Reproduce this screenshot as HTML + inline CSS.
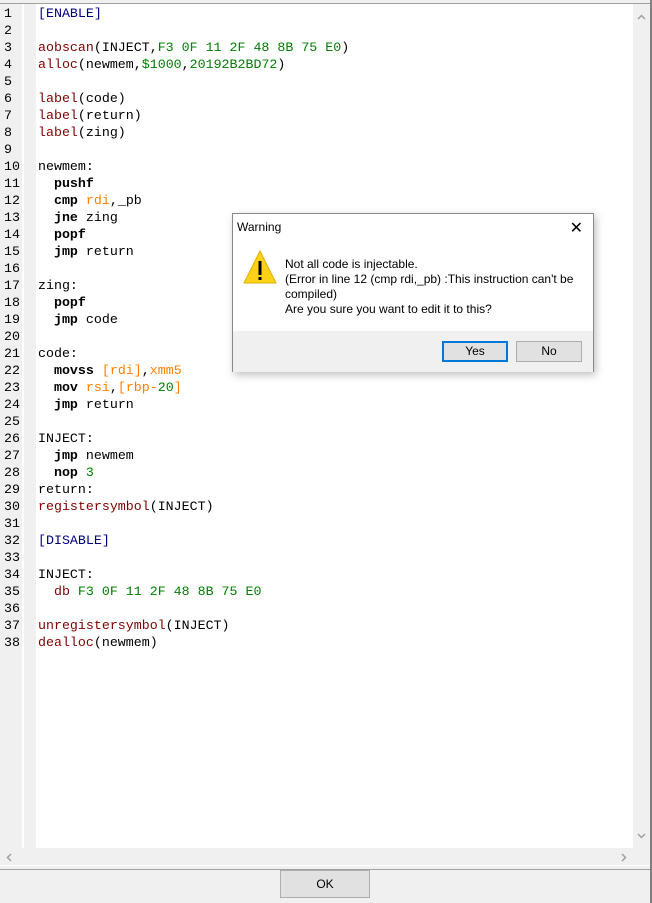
<!DOCTYPE html>
<html><head><meta charset="utf-8"><style>
*{margin:0;padding:0;box-sizing:border-box}
body{width:652px;height:903px;background:#f0f0f0;position:relative;overflow:hidden;font-family:"Liberation Sans",sans-serif}
.topline{position:absolute;left:0;top:3px;width:652px;height:1px;background:#a0a0a0}
.rightb{position:absolute;right:0;top:0;width:2px;height:903px;background:#808080}
.ed{position:absolute;left:0;top:4px;width:650px;height:862px;background:#fff}
.g1{position:absolute;left:0;top:0;width:22px;height:844px;background:#f0f0f0}
.g2{position:absolute;left:24px;top:0;width:12px;height:844px;background:#f0f0f0}
.vs{position:absolute;left:633px;top:0;width:17px;height:844px;background:#f0f0f0}
.hs{position:absolute;left:0;top:844px;width:650px;height:17px;background:#f0f0f0}
.sep{position:absolute;left:0;top:865px;width:650px;height:1px;background:#a0a0a0}
pre{position:absolute;top:5px;font-family:"Liberation Mono",monospace;font-size:13.3px;line-height:17px;color:#000}
.nums{left:4px}
.code{left:38px}
.k{color:#800000}.b{color:#000080}.n{color:#008000}.o{color:#ff8000}.i{font-weight:bold}
svg.a{position:absolute}
.ok{position:absolute;left:280px;top:870px;width:90px;height:28px;background:#e1e1e1;border:1px solid #adadad;font-size:12px;text-align:center;line-height:26px}
.dlg{position:absolute;left:232px;top:213px;width:362px;height:159px;background:#fff;border:1px solid #888;box-shadow:2px 3px 8px rgba(0,0,0,.25)}
.title{position:absolute;left:4px;top:6px;font-size:12px}
.x{position:absolute;right:10px;top:4px;font-size:16px;color:#000}
.msg{position:absolute;left:52px;top:43px;font-size:12px;line-height:15px}
.foot{position:absolute;left:0;top:117px;width:360px;height:41px;background:#f0f0f0}
.btn{position:absolute;top:10px;width:66px;height:21px;background:#e1e1e1;border:1px solid #adadad;font-size:12px;text-align:center;line-height:19px}
</style></head><body>
<div class="ed">
<div class="g1"></div><div class="g2"></div><div class="vs"></div><div class="hs"></div><div class="sep"></div>
<svg class="a" style="left:637px;top:10px" width="9" height="6"><path d="M1 5 L4.5 1.5 L8 5" fill="none" stroke="#a0a0a0" stroke-width="1.5"/></svg>
<svg class="a" style="left:637px;top:829px" width="9" height="6"><path d="M1 1 L4.5 4.5 L8 1" fill="none" stroke="#a0a0a0" stroke-width="1.5"/></svg>
<svg class="a" style="left:6px;top:849px" width="6" height="9"><path d="M5 1 L1.5 4.5 L5 8" fill="none" stroke="#a0a0a0" stroke-width="1.5"/></svg>
<svg class="a" style="left:621px;top:849px" width="6" height="9"><path d="M1 1 L4.5 4.5 L1 8" fill="none" stroke="#a0a0a0" stroke-width="1.5"/></svg>
</div>
<div class="topline"></div>
<pre class="nums">1
2
3
4
5
6
7
8
9
10
11
12
13
14
15
16
17
18
19
20
21
22
23
24
25
26
27
28
29
30
31
32
33
34
35
36
37
38</pre>
<pre class="code"><span class="b">[ENABLE]</span>

<span class="k">aobscan</span>(INJECT,<span class="n">F3 0F 11 2F 48 8B 75 E0</span>)
<span class="k">alloc</span>(newmem,<span class="n">$1000</span>,<span class="n">20192B2BD72</span>)

<span class="k">label</span>(code)
<span class="k">label</span>(return)
<span class="k">label</span>(zing)

newmem:
  <span class="i">pushf</span>
  <span class="i">cmp</span> <span class="o">rdi</span>,_pb
  <span class="i">jne</span> zing
  <span class="i">popf</span>
  <span class="i">jmp</span> return

zing:
  <span class="i">popf</span>
  <span class="i">jmp</span> code

code:
  <span class="i">movss</span> <span class="o">[rdi]</span>,<span class="o">xmm5</span>
  <span class="i">mov</span> <span class="o">rsi</span>,<span class="o">[rbp-</span><span class="n">20</span><span class="o">]</span>
  <span class="i">jmp</span> return

INJECT:
  <span class="i">jmp</span> newmem
  <span class="i">nop</span> <span class="n">3</span>
return:
<span class="k">registersymbol</span>(INJECT)

<span class="b">[DISABLE]</span>

INJECT:
  <span class="k">db</span> <span class="n">F3 0F 11 2F 48 8B 75 E0</span>

<span class="k">unregistersymbol</span>(INJECT)
<span class="k">dealloc</span>(newmem)</pre>
<div class="rightb"></div>
<div class="ok">OK</div>
<div class="dlg">
<div class="title">Warning</div>
<div class="x">&#10005;</div>
<svg style="position:absolute;left:10px;top:36px" width="34" height="34" viewBox="0 0 34 34"><polygon points="17,1 33,33 1,33" fill="#fcd116" stroke="#e0b000" stroke-width="1"/><rect x="15.5" y="11" width="3" height="14" fill="#000"/><rect x="15.5" y="27" width="3" height="3" fill="#000"/></svg>
<div class="msg">Not all code is injectable.<br>(Error in line 12 (cmp rdi,_pb) :This instruction can't be<br>compiled)<br>Are you sure you want to edit it to this?</div>
<div class="foot">
<div class="btn" style="left:209px;border:2px solid #0078d7;line-height:17px">Yes</div>
<div class="btn" style="left:283px">No</div>
</div>
</div>
</body></html>
